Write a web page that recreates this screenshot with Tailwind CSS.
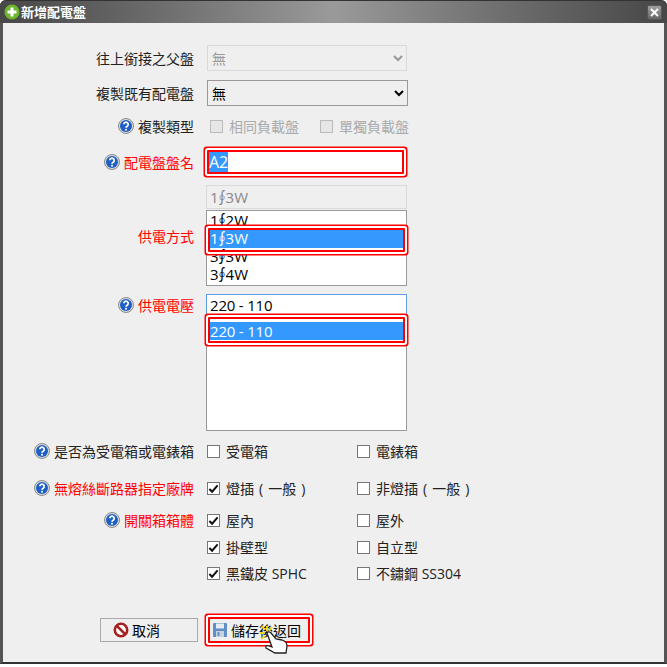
<!DOCTYPE html>
<html lang="zh-Hant">
<head>
  <meta charset="UTF-8" />
  <title>新增配電盤</title>
  <script src="https://cdn.jsdelivr.net/npm/@tailwindcss/browser@4"></script>
</head>
<body class="w-[667px] h-[667px] overflow-hidden bg-white font-['Open_Sans','Noto_Sans_CJK_TC',sans-serif] text-[14px] text-black">
  <svg class="hidden">
    <symbol id="help" viewBox="0 0 16 16">
      <circle cx="8" cy="8" r="7.5" fill="#dcdcdc" stroke="#8a8a8a" />
      <circle cx="8" cy="8" r="6" fill="#1d5fc4" />
      <path d="M5.8 6.3a2.2 2.2 0 1 1 3.4 1.9c-.8.5-1.2.9-1.2 1.6" fill="none" stroke="#fff" stroke-width="1.7" />
      <rect x="7.1" y="10.8" width="1.8" height="1.8" fill="#fff" />
    </symbol>
    <symbol id="check" viewBox="0 0 12 12">
      <path d="M1.5 6.5 4.5 9.5 10.5 2.5" fill="none" stroke="#111" stroke-width="2.2" />
    </symbol>
  </svg>

  <div class="relative w-[667px] h-[664px] bg-[#efefef] border-x-[3px] border-b-[2px] border-x-[#555] border-b-[#333] rounded-t-[6px]">
    <!-- title bar -->
    <div class="-mx-[3px] h-[23px] flex items-center justify-between pl-[4px] pr-[5px] rounded-t-[6px] border-t border-[#333] bg-gradient-to-r from-[#474747] via-[#9a9a9a] to-[#474747]">
      <div class="flex items-center gap-[1px]">
        <svg class="w-[16px] h-[16px]" viewBox="0 0 16 16">
          <circle cx="8" cy="8" r="7.6" fill="#6cb52d" />
          <path d="M8 3.5v9M3.5 8h9" stroke="#fff" stroke-width="3" />
        </svg>
        <span class="font-bold text-white text-[13px] leading-none">新增配電盤</span>
      </div>
      <div class="w-[15px] h-[15px] rounded-[2px] bg-gradient-to-b from-[#a0a0a0] to-[#666] border border-[#555] flex items-center justify-center">
        <svg class="w-[9px] h-[9px]" viewBox="0 0 9 9"><path d="M1 1l7 7M8 1 1 8" stroke="#fff" stroke-width="2" /></svg>
      </div>
    </div>

    <!-- form -->
    <div class="pt-[22px] -ml-[3px]">
      <div class="flex items-center h-[26px]">
        <label class="w-[194px] text-right text-[#222]">往上銜接之父盤</label>
        <select disabled class="ml-[13px] w-[200px] h-[26px] pl-0 bg-[#efefef] border border-[#d9d9d9] text-[#999]"><option>無</option></select>
      </div>
      <div class="flex items-center h-[26px] mt-[9px]">
        <label class="w-[194px] text-right text-[#222]">複製既有配電盤</label>
        <select class="ml-[13px] w-[201px] h-[26px] pl-0 bg-[#efefef] border border-[#999] text-black"><option>無</option></select>
      </div>
      <div class="flex items-center h-[20px] mt-[10px]">
        <label class="w-[194px] flex justify-end items-center gap-[4px] text-[#222]"><svg class="w-[16px] h-[16px]"><use href="#help" /></svg>複製類型</label>
        <span class="ml-[16px] w-[13px] h-[13px] bg-[#e6e6e6] border border-[#bbb]"></span>
        <span class="ml-[6px] text-[#aaa]">相同負載盤</span>
        <span class="ml-[21px] w-[13px] h-[13px] bg-[#e6e6e6] border border-[#bbb]"></span>
        <span class="ml-[6px] text-[#aaa]">單獨負載盤</span>
      </div>

      <div class="flex items-center h-[24px] mt-[14px]">
        <label class="w-[194px] flex justify-end items-center gap-[4px] text-[#f00]"><svg class="w-[16px] h-[16px]"><use href="#help" /></svg>配電盤盤名</label>
        <div class="relative ml-[13px] w-[197px] h-[24px] bg-white flex items-center px-[2px]">
          <span class="bg-[#3399ff] text-white text-[16px] leading-[20px]">A2</span>
          <div class="absolute inset-0 border-2 border-[#f00] shadow-[0_0_0_2px_#fff,0_0_0_3.5px_#f00] rounded-[1px]"></div>
        </div>
      </div>

      <!-- 供電方式 -->
      <div class="flex mt-[11px]">
        <label class="w-[194px] pt-[41px] text-right text-[#f00]">供電方式</label>
        <div class="ml-[12px] w-[201px]">
          <div class="h-[24px] bg-[#efefef] border border-[#d9d9d9] pl-[3px] text-[15px] leading-[22px] text-[#888]">1<span class="-mx-[4px] font-['Noto_Sans_CJK_TC']">∮</span>3W</div>
          <div class="relative mt-[1px] h-[76px] pt-[1px] bg-white border border-[#999] text-[15px] leading-[16px]">
            <div class="h-[18px] pl-[3px]">1<span class="-mx-[4px] font-['Noto_Sans_CJK_TC']">∮</span>2W</div>
            <div class="h-[18px] pl-[3px] bg-[#3399ff] text-white">1<span class="-mx-[4px] font-['Noto_Sans_CJK_TC']">∮</span>3W</div>
            <div class="h-[18px] pl-[3px]">3<span class="-mx-[4px] font-['Noto_Sans_CJK_TC']">∮</span>3W</div>
            <div class="h-[18px] pl-[3px]">3<span class="-mx-[4px] font-['Noto_Sans_CJK_TC']">∮</span>4W</div>
            <div class="absolute left-[1px] right-[1px] top-[17px] h-[24px] border-2 border-[#f00] shadow-[0_0_0_2px_#fff,0_0_0_3.5px_#f00] rounded-[1px]"></div>
          </div>
        </div>
      </div>

      <!-- 供電電壓 -->
      <div class="flex mt-[8px]">
        <label class="w-[194px] pt-[1px] flex justify-end items-start gap-[4px] text-[#f00]"><svg class="w-[16px] h-[16px] mt-[2px]"><use href="#help" /></svg>供電電壓</label>
        <div class="ml-[12px] w-[201px]">
          <div class="h-[23px] bg-white border border-[#5a9ee6] pl-[3px] text-[15px] leading-[21px] tracking-[-0.2px]">220 - 110</div>
          <div class="relative h-[114px] pt-[5px] bg-white border border-[#999] border-t-0 text-[15px] tracking-[-0.2px]">
            <div class="h-[18px] pl-[3px] bg-[#3399ff] text-white leading-[18px]">220 - 110</div>
            <div class="absolute left-[1px] right-[1px] top-0 h-[26px] border-2 border-[#f00] shadow-[0_0_0_2px_#fff,0_0_0_3.5px_#f00] rounded-[1px]"></div>
          </div>
        </div>
      </div>

      <!-- checkbox rows -->
      <div class="flex items-center h-[20px] mt-[10px]">
        <label class="w-[194px] flex justify-end items-center gap-[4px] text-[#222]"><svg class="w-[16px] h-[16px]"><use href="#help" /></svg>是否為受電箱或電錶箱</label>
        <span class="ml-[13px] w-[13px] h-[13px] bg-white border border-[#777]"></span>
        <span class="ml-[6px] w-[131px] text-[#222]">受電箱</span>
        <span class="w-[13px] h-[13px] bg-white border border-[#777]"></span>
        <span class="ml-[6px] text-[#222]">電錶箱</span>
      </div>
      <div class="flex items-center h-[20px] mt-[17px]">
        <label class="w-[194px] flex justify-end items-center gap-[4px] text-[#f00]"><svg class="w-[16px] h-[16px]"><use href="#help" /></svg>無熔絲斷路器指定廠牌</label>
        <span class="ml-[13px] w-[13px] h-[13px] bg-white border border-[#777] flex items-center justify-center"><svg class="w-[11px] h-[11px]"><use href="#check" /></svg></span>
        <span class="ml-[6px] w-[131px] text-[#222]">燈插<span class="mx-[5px]">(</span>一般<span class="ml-[5px]">)</span></span>
        <span class="w-[13px] h-[13px] bg-white border border-[#777]"></span>
        <span class="ml-[6px] text-[#222]">非燈插<span class="mx-[5px]">(</span>一般<span class="ml-[5px]">)</span></span>
      </div>
      <div class="flex items-center h-[20px] mt-[12px]">
        <label class="w-[194px] flex justify-end items-center gap-[4px] text-[#f00]"><svg class="w-[16px] h-[16px]"><use href="#help" /></svg>開關箱箱體</label>
        <span class="ml-[13px] w-[13px] h-[13px] bg-white border border-[#777] flex items-center justify-center"><svg class="w-[11px] h-[11px]"><use href="#check" /></svg></span>
        <span class="ml-[6px] w-[131px] text-[#222]">屋內</span>
        <span class="w-[13px] h-[13px] bg-white border border-[#777]"></span>
        <span class="ml-[6px] text-[#222]">屋外</span>
      </div>
      <div class="flex items-center h-[20px] mt-[7px] pl-[207px]">
        <span class="w-[13px] h-[13px] bg-white border border-[#777] flex items-center justify-center"><svg class="w-[11px] h-[11px]"><use href="#check" /></svg></span>
        <span class="ml-[6px] w-[131px] text-[#222]">掛壁型</span>
        <span class="w-[13px] h-[13px] bg-white border border-[#777]"></span>
        <span class="ml-[6px] text-[#222]">自立型</span>
      </div>
      <div class="flex items-center h-[20px] mt-[6px] pl-[207px]">
        <span class="w-[13px] h-[13px] bg-white border border-[#777] flex items-center justify-center"><svg class="w-[11px] h-[11px]"><use href="#check" /></svg></span>
        <span class="ml-[6px] w-[131px] text-[#222]">黑鐵皮 SPHC</span>
        <span class="w-[13px] h-[13px] bg-white border border-[#777]"></span>
        <span class="ml-[6px] text-[#222]">不鏽鋼 SS304</span>
      </div>

      <!-- buttons -->
      <div class="flex items-center mt-[34px] pl-[100px]">
        <button class="w-[98px] h-[24px] bg-[#efefef] border border-[#aaa] flex items-center pl-[12px] gap-[3px]">
          <svg class="w-[16px] h-[16px]" viewBox="0 0 16 16"><circle cx="8" cy="8" r="6.2" fill="#fff" stroke="#a5201f" stroke-width="2.6" /><path d="M3.6 3.6l8.8 8.8" stroke="#a5201f" stroke-width="2.6" /></svg>
          取消
        </button>
        <button class="relative ml-[10px] w-[102px] h-[26px] bg-[#efefef] flex items-center pl-[4px] gap-[3px]">
          <svg class="w-[16px] h-[16px]" viewBox="0 0 16 16"><rect x="1" y="1" width="14" height="14" rx="1" fill="#5f8fc4" /><rect x="4" y="1.5" width="8" height="5" fill="#e8eef5" /><rect x="4" y="9" width="8" height="6" fill="#c8d2de" /><rect x="5.5" y="10" width="2" height="4" fill="#5f8fc4" /></svg>
          儲存後返回
          <div class="absolute inset-0 border-2 border-[#f00] shadow-[0_0_0_2px_#fff,0_0_0_3.5px_#f00] rounded-[1px]"></div>
        </button>
      </div>
    </div>

    <!-- mouse cursor over the save button -->
    <svg class="absolute left-[252px] top-[623px] w-[36px] h-[34px]" viewBox="0 0 36 34">
      <path d="M12 3v5M5 10h5M14 9l1 5M7 3l3 4M17 4l-3 4M6 16l4-3" stroke="#e8d820" stroke-width="2" />
      <path d="M12 10c1-2 3-1 4 0l5 6 6 1c3 1 5 3 5 6l-1 7H20l-9-5c-1-2 1-3 3-2l3 1Z" fill="#fff" stroke="#222" stroke-width="1.3" />
    </svg>
  </div>
</body>
</html>
